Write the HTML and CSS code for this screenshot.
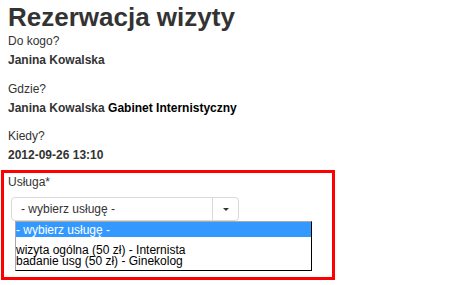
FILE: index.html
```html
<!DOCTYPE html>
<html lang="pl">
<head>
<meta charset="utf-8">
<title>Rezerwacja wizyty</title>
<link rel="stylesheet" href="styles.css">
</head>
<body>
<div class="page">
  <h1 class="title">Rezerwacja wizyty</h1>
  <div class="field">
    <div class="label">Do kogo?</div>
    <div class="value">Janina Kowalska</div>
  </div>
  <div class="field">
    <div class="label">Gdzie?</div>
    <div class="value">Janina Kowalska <span class="place">Gabinet Internistyczny</span></div>
  </div>
  <div class="field">
    <div class="label">Kiedy?</div>
    <div class="value">2012-09-26 13:10</div>
  </div>
  <div class="box">
    <div class="label">Usługa*</div>
    <div class="combo">
      <div class="select">
        <span class="select-text">- wybierz usługę -</span>
        <span class="select-btn"><span class="caret"></span></span>
      </div>
      <ul class="options">
        <li class="opt opt-selected">- wybierz usługę -</li>
        <li class="opt-spacer"></li>
        <li class="opt">wizyta ogólna (50 zł) - Internista</li>
        <li class="opt">badanie usg (50 zł) - Ginekolog</li>
      </ul>
    </div>
  </div>
</div>
</body>
</html>
```
FILE: styles.css
```css
html, body {
  margin: 0;
  padding: 0;
  background: #fff;
}
body {
  font-family: "Liberation Sans", Arial, sans-serif;
  font-size: 12px;
  color: #333;
}
.page {
  padding: 2px 8px 0 8px;
}
.title {
  margin: 0;
  font-size: 26px;
  line-height: 30px;
  font-weight: bold;
  color: #333;
}
.label {
  line-height: 19px;
}
.value {
  line-height: 19px;
  font-weight: bold;
}
.place {
  color: #000;
}
.field + .field {
  margin-top: 9.5px;
}
.box {
  margin: 5px 0 0 -7px;
  width: 334px;
  box-sizing: border-box;
  border: 3px solid #ff0000;
  padding: 0 0 56px 4px;
}
.combo {
  position: relative;
  margin: 5px 0 0 3px;
  width: 228px;
  height: 24px;
}
.select {
  display: flex;
  height: 24px;
  box-sizing: border-box;
  border: 1px solid #d9d9d9;
  border-radius: 4px;
  background: #fff;
}
.select-text {
  flex: 1;
  padding-left: 9px;
  line-height: 22px;
  color: #333;
}
.select-btn {
  width: 25px;
  border-left: 1px solid #d9d9d9;
  display: flex;
  align-items: center;
  justify-content: center;
}
.caret {
  width: 0;
  height: 0;
  border-left: 3px solid transparent;
  border-right: 3px solid transparent;
  border-top: 3px solid #333;
}
.options {
  position: absolute;
  top: 24px;
  left: 4px;
  width: 297px;
  box-sizing: border-box;
  margin: 0;
  padding: 0 0 3px 0;
  list-style: none;
  background: #fff;
  border-top: 1px solid #a9a9a9;
  border-left: 1px solid #a9a9a9;
  border-right: 1px solid #000;
  border-bottom: 1px solid #000;
  color: #000;
}
.opt {
  line-height: 11px;
  white-space: nowrap;
}
.opt-selected {
  background: #3399ff;
  color: #fff;
  line-height: 14px;
  padding-top: 1px;
}
.opt-spacer {
  height: 8px;
}
```
